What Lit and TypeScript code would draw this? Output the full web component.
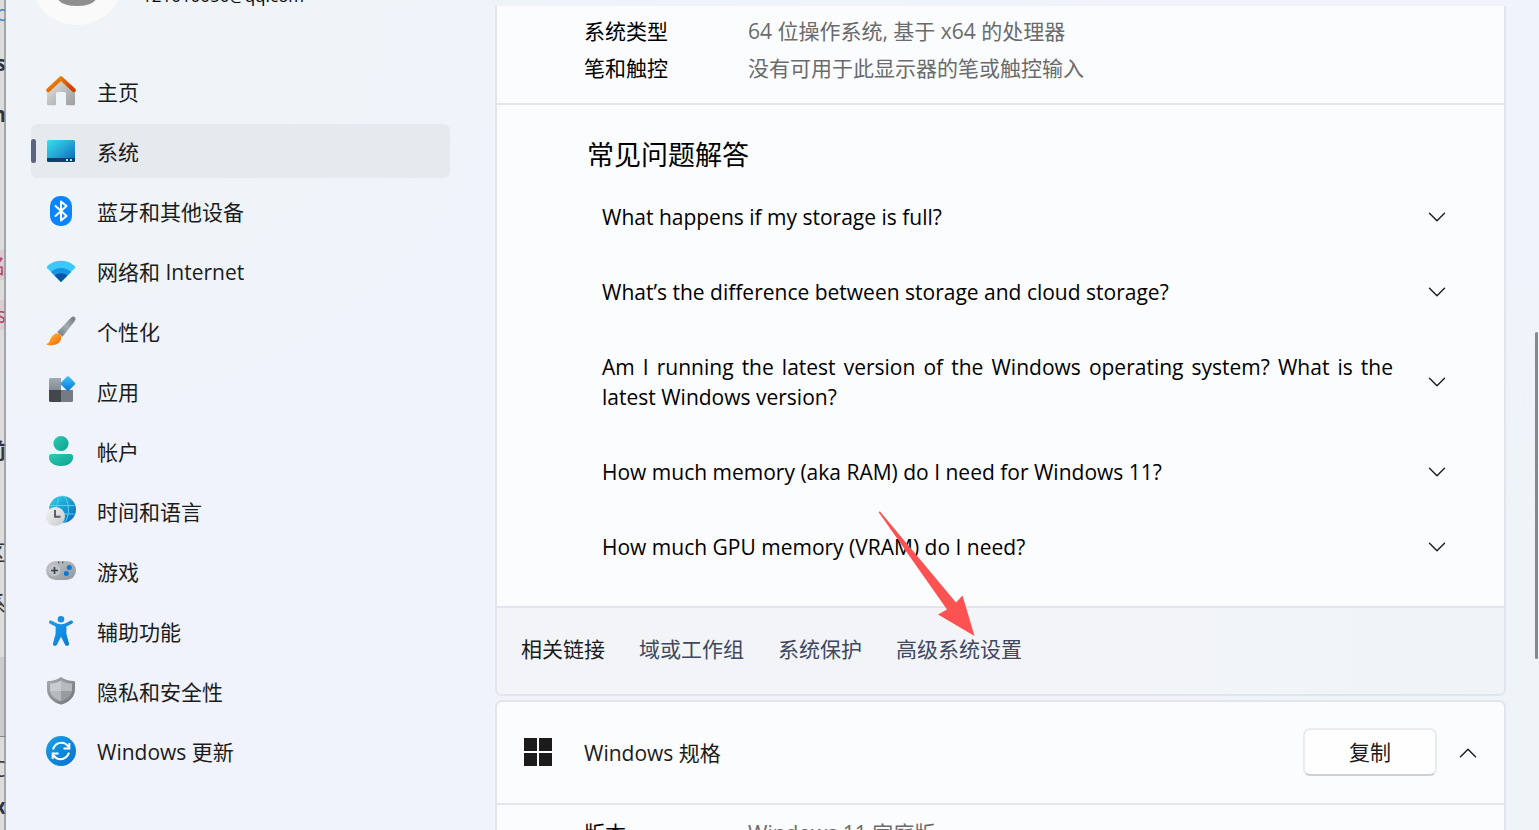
import { LitElement, html, css, svg } from "lit";
import { customElement, property } from "lit/decorators.js";

const chevron = (up = false) => html`<svg class="chev" viewBox="0 0 18 18" width="18" height="18" aria-hidden="true">
  <path d=${up ? "M1.5 13.8 9 6.2l7.5 7.6" : "M1.5 5.2 9 12.8l7.5-7.6"} fill="none" stroke="#1c1c1c" stroke-width="1.4" stroke-linecap="round" stroke-linejoin="round"/></svg>`;

const icons: Record<string, unknown> = {
  home: svg`<defs><linearGradient id="a" x1="0" y1="0" x2="1" y2="1"><stop offset="0" stop-color="#e6e6e6"/><stop offset="1" stop-color="#9c9c9c"/></linearGradient>
    <linearGradient id="b" x1="0" y1="0" x2="1" y2="0.6"><stop offset="0" stop-color="#f79a0c"/><stop offset="1" stop-color="#d43f00"/></linearGradient></defs>
    <path d="M1 14 15 2l14 12v14a1.300 1.300 0 0 1-1.300 1.300H21.300a1.300 1.300 0 0 1-1.300-1.300V17.500a1.500 1.500 0 0 0-1.500-1.500h-7A1.500 1.500 0 0 0 10 17.500V28a1.300 1.300 0 0 1-1.300 1.300H2.300A1.300 1.300 0 0 1 1 28Z" fill="url(#a)"/>
    <path d="M2.100 14.200 15 2.200l12.900 12" fill="none" stroke="url(#b)" stroke-width="4" stroke-linecap="round" stroke-linejoin="round"/>`,
  system: svg`<defs><linearGradient id="a" x1="0" y1="0" x2="1" y2="1"><stop offset="0" stop-color="#34e0ea"/><stop offset=".5" stop-color="#25a5d6"/><stop offset="1" stop-color="#0862b8"/></linearGradient></defs>
    <rect x="1" y="4" width="28" height="22" rx="1.600" fill="url(#a)"/><path d="M1 22h28v2.400a1.600 1.600 0 0 1-1.600 1.600H2.600A1.600 1.600 0 0 1 1 24.400Z" fill="#0b4468"/>
    <path d="M20 23h2v2h-2zM24 23h2v2h-2z" fill="#b8dcec"/>`,
  bluetooth: svg`<rect x="4" y="0" width="22" height="30" rx="10" fill="#0a85ff"/>
    <path d="m9.500 10 11 10-5.500 4.500v-19l5.500 4.500-11 10" fill="none" stroke="#fff" stroke-width="2" stroke-linejoin="round" stroke-linecap="round"/>`,
  wifi: svg`<path d="M15 26 1.300 12.200a1.500 1.500 0 0 1 0-2.100C8.800 3 21.200 3 28.700 10.100a1.500 1.500 0 0 1 0 2.100Z" fill="#3bcaf8"/>
    <path d="M15 26 5 16c5.600-5.300 14.400-5.300 20 0Z" fill="#1593e4"/><path d="m15 26-6.300-6.400c3.700-3 8.900-3 12.600 0Z" fill="#0b56a2"/>`,
  brush: svg`<defs><linearGradient id="a" x1="1" y1="0" x2="0" y2="1"><stop offset="0" stop-color="#6f767c"/><stop offset=".5" stop-color="#a4abb1"/><stop offset="1" stop-color="#6f767c"/></linearGradient>
    <linearGradient id="b" x1="0" y1="0" x2="1" y2="1"><stop offset="0" stop-color="#ffc23b"/><stop offset=".55" stop-color="#fb8d1a"/><stop offset="1" stop-color="#e65a16"/></linearGradient></defs>
    <path d="M28.800 1.200c1.300 1.200.7 2.800-.4 4.200L16.500 20.800l-5.200-4.900L25.200 1.500c1.200-1.200 2.500-1.400 3.600-.3Z" fill="url(#a)"/>
    <path d="M8 18.500c2.200-1.800 4.800-1.300 6.200.3 1.500 1.600 1.500 4.200-.3 6.700C11.500 29 4.500 30.200.8 28.800c-.5-.2-.4-.8.100-1 3.700-1.200 2.600-6.200 7.100-9.300Z" fill="url(#b)"/>`,
  apps: svg`<defs><linearGradient id="a" x1="0" y1="0" x2="0" y2="1"><stop offset="0" stop-color="#a2abb2"/><stop offset="1" stop-color="#858d94"/></linearGradient>
    <linearGradient id="b" x1="0" y1="0" x2="1" y2="1"><stop offset="0" stop-color="#3fc5fb"/><stop offset="1" stop-color="#0672d8"/></linearGradient></defs>
    <path d="M4.500 2H15v12H3V3.500A1.500 1.500 0 0 1 4.500 2Z" fill="url(#a)"/><path d="M3 14h12v12H4.500A1.500 1.500 0 0 1 3 24.500Z" fill="#42474b"/>
    <path d="M15 14h12v10.500a1.500 1.500 0 0 1-1.500 1.500H15Z" fill="#747b82"/>
    <rect x="16.300" y="2" width="11.200" height="11.200" rx="1.300" transform="rotate(45 21.900 7.600)" fill="url(#b)"/>`,
  account: svg`<defs><linearGradient id="a" x1="0" y1="0" x2="1" y2="1"><stop offset="0" stop-color="#30ccb5"/><stop offset="1" stop-color="#0ba18c"/></linearGradient></defs>
    <circle cx="15" cy="7.500" r="7.600" fill="url(#a)"/><path d="M5.500 18h19a2.500 2.500 0 0 1 2.500 2.500v1C27 26.800 21.500 30 15 30S3 26.800 3 21.500v-1A2.500 2.500 0 0 1 5.500 18Z" fill="url(#a)"/>`,
  time: svg`<defs><linearGradient id="a" x1="0" y1="0" x2="1" y2="1"><stop offset="0" stop-color="#34d3e6"/><stop offset="1" stop-color="#0761be"/></linearGradient>
    <linearGradient id="b" x1="0" y1="0" x2="1" y2="1"><stop offset="0" stop-color="#f4f4f4"/><stop offset="1" stop-color="#c8cacc"/></linearGradient></defs>
    <circle cx="16.500" cy="13.500" r="13.500" fill="url(#a)"/><g fill="none" stroke="#50d5ef" stroke-width="1"><ellipse cx="16.500" cy="13.500" rx="6" ry="13.500"/><path d="M4.500 9.500h24M4.500 18h24"/></g>
    <circle cx="9.500" cy="20.500" r="9.500" fill="url(#b)"/><path d="M9 14v6.800h5.500" fill="none" stroke="#5a5d60" stroke-width="1.900"/>`,
  game: svg`<defs><linearGradient id="a" x1="0" y1="0" x2="1" y2="1"><stop offset="0" stop-color="#c3c8cb"/><stop offset="1" stop-color="#8f969b"/></linearGradient></defs>
    <rect x="0" y="5" width="30" height="19" rx="9.500" fill="url(#a)"/><circle cx="8.500" cy="14.500" r="5.800" fill="#c9cccf" opacity=".7"/>
    <path d="M8.500 11v7M5 14.500h7" stroke="#3b3f42" stroke-width="1.600"/><circle cx="23.300" cy="11.500" r="2.500" fill="#0b78d4"/><circle cx="20.300" cy="17.500" r="2.500" fill="#0b78d4"/>
    <path d="M12 6.500h1.400M16 6.500h1.400" stroke="#4a4e52" stroke-width="1.400"/>`,
  access: svg`<defs><linearGradient id="a" x1="0" y1="0" x2="1" y2="1"><stop offset="0" stop-color="#1ba0ea"/><stop offset="1" stop-color="#0b78d4"/></linearGradient></defs>
    <circle cx="15" cy="3.300" r="3.300" fill="#168fe0"/><path d="M5.300 4.600 11 7.400q4 1.600 8 0l5.700-2.800c2-.8 3.300 2 1.300 3.100l-5.600 2.900v7.200l2.600 9.800c.6 2.600-3 3.200-3.900 1.200L15 20.800l-4.100 8c-1 2-4.500 1.200-3.900-1.200l2.600-9.800v-7.200L4 7.700C2 6.600 3.300 3.800 5.300 4.600Z" fill="url(#a)"/>`,
  shield: svg`<defs><linearGradient id="a" x1="0" y1="0" x2="1" y2="1"><stop offset="0" stop-color="#a9adb1"/><stop offset="1" stop-color="#6f7479"/></linearGradient></defs>
    <path d="M15 1c3.800 2.900 8.200 3.900 12.800 3.900.7 0 1.200.4 1.200 1.100v7.200C29 20.800 23.500 26 15.500 28.400q-.5.200-1 0C6.500 26 1 20.800 1 13.200V6c0-.7.500-1.100 1.200-1.100C6.800 4.900 11.200 3.900 15 1Z" fill="url(#a)"/>
    <path d="M15 4.600V15H4V7.600C8.200 7.500 11.800 6.700 15 4.600Z" fill="#c9ccce"/><path d="M15 4.600V15h11V7.600C21.800 7.500 18.200 6.700 15 4.600Z" fill="#b6babd"/>
    <path d="M15 15v10.300C9 23.200 4.600 20 4.100 15Z" fill="#b6babd"/><path d="M15 15v10.300C21 23.200 25.400 20 25.900 15Z" fill="#989ca1"/>`,
  update: svg`<defs><linearGradient id="a" x1="0" y1="0" x2="1" y2="1"><stop offset="0" stop-color="#1ba0e6"/><stop offset="1" stop-color="#0671d0"/></linearGradient></defs>
    <circle cx="15" cy="15" r="15" fill="url(#a)"/><g fill="none" stroke="#fff" stroke-width="2"><path d="M7 13.300C8.500 9 12 6.800 15.500 6.800c3 0 5.300 1.500 6.700 4M23.300 7v5.600h-5.800M23 16.700c-1.500 4.300-5 6.500-8.500 6.500-3 0-5.300-1.500-6.700-4M6.700 23v-5.600h5.800"/></g>`,
};

const nav = [
  ["home", "主页"], ["system", "系统"], ["bluetooth", "蓝牙和其他设备"], ["wifi", "网络和 Internet"],
  ["brush", "个性化"], ["apps", "应用"], ["account", "帐户"], ["time", "时间和语言"],
  ["game", "游戏"], ["access", "辅助功能"], ["shield", "隐私和安全性"], ["update", "Windows 更新"],
];

const questions = [
  "What happens if my storage is full?",
  "What’s the difference between storage and cloud storage?",
  "Am I running the latest version of the Windows operating system? What is the latest Windows version?",
  "How much memory (aka RAM) do I need for Windows 11?",
  "How much GPU memory (VRAM) do I need?",
];

// Sliver of the page behind the window: text, centre line, style
const slivers: [string, number, string][] = [
  ["ic", 13, "blue"], ["s", 63, "bold"], ["n", 114, "bold"], ["名", 265, "pink"], ["s", 315, "pink"],
  ["前", 450, "bold"], ["区", 552, "plain"], ["系", 603, "plain"], ["C", 769, "plain"], ["x", 806, "bold"],
];

@customElement("nav-icon")
export class NavIcon extends LitElement {
  @property() name = "home";
  static styles = css`:host { display: block; width: 30px; height: 30px; } svg { display: block; overflow: visible; }`;
  render() {
    return html`<svg viewBox="0 0 30 30" width="30" height="30" aria-hidden="true">${icons[this.name]}</svg>`;
  }
}

@customElement("app-root")
export class AppRoot extends LitElement {
  static styles = css`
    :host {
      display: grid; grid-template-columns: 6px 444px 1fr;
      height: 100vh; overflow: hidden; position: relative; box-sizing: border-box;
      font: 21px/30px "Open Sans", "Noto Sans CJK SC", sans-serif; color: #1b1b1b;
      background:
        linear-gradient(to right, #eef4f8, #eef4f800 1100px) top / 100% 6px no-repeat,
        radial-gradient(ellipse 560px 460px at 0 0, #eef4f8 55%, #eef4f800),
        radial-gradient(ellipse 340px 600px at 100% 100%, #eef4f8 50%, #eef4f800),
        #f0f3fb;
    }
    * { box-sizing: border-box; }
    a { color: inherit; text-decoration: none; }
    button { font: inherit; color: inherit; background: none; border: 0; padding: 0; cursor: pointer; }
    .behind { position: relative; overflow: hidden; background: #dcdcdc; }
    .behind::before { content: ""; position: absolute; inset: 657px 0 93px; background: #c9cbcd; border-bottom: 1px solid #85888c; }
    .behind::after { content: ""; position: absolute; inset: 0 0 0 4px; background: #8a8a8aaa; }
    .frag { position: absolute; right: 0; height: 30px; width: 6px; direction: rtl; white-space: nowrap; color: #333; }
    .frag.blue { color: #3f86c8; }
    .frag.bold { font-weight: 700; color: #2b3546; }
    .frag.pink { color: #b8446a; background: #d9cdd1; }
    .side { padding-left: 25px; min-width: 0; }
    .user { display: flex; gap: 19px; height: 90px; margin-top: -65px; margin-bottom: 39px; font-size: 17px; line-height: 24px; color: #000; }
    .avatar { width: 92px; height: 90px; border-radius: 50%; background: #fafafa; display: grid; justify-items: center; align-items: end; padding-bottom: 19px; }
    .avatar svg { display: block; }
    .mail { padding-top: 49px; }
    nav { display: flex; flex-direction: column; gap: 6px; }
    .item { display: flex; align-items: center; gap: 21px; height: 54px; padding-left: 15px; border-radius: 6px; position: relative; }
    .item span { padding-top: 2px; }
    .item.on { background: #e6e9ee; }
    .item.on::before { content: ""; position: absolute; left: 0; top: 15px; width: 5px; height: 24px; border-radius: 3px; background: #5a667c; }
    main { padding: 6px 33px 0 45px; overflow: hidden; min-width: 0; }
    .clip { overflow: hidden; display: flex; flex-direction: column; gap: 4px; }
    .card { border: 2px solid #e2e5eb; border-radius: 7px; background: #fbfcfe; flex: none; }
    .card.first { border-top: 0; border-radius: 0 0 7px 7px; }
    dl { margin: 0; display: grid; grid-template-columns: 164px 1fr; row-gap: 7px; padding: 10px 24px 20px 87px; color: #000; }
    .head + dl { padding-top: 13px; }
    dd { margin: 0; color: #6a6b6c; }
    .faq { border-top: 2px solid #e2e5eb; border-bottom: 2px solid #e2e5eb; padding: 30px 58px 44px 90px; color: #000; }
    h2 { margin: 0 0 27px; font-size: 27px; line-height: 40px; font-weight: 400; }
    .list { display: flex; flex-direction: column; gap: 45px; padding-left: 15px; }
    .q { display: flex; align-items: center; justify-content: space-between; gap: 35px; width: 100%; text-align: justify; }
    .chev { display: block; flex: none; }
    .links { display: flex; align-items: center; gap: 34px; height: 86px; padding: 0 24px 4px; background: linear-gradient(to right, #f2f4f8 60%, #f0f4f7); border-radius: 0 0 5px 5px; color: #404860; }
    .links h3 { margin: 0; font-size: 21px; font-weight: 400; color: #1b1b1b; }
    .head { display: flex; align-items: center; height: 103px; padding: 0 27px 2px 26px; border-bottom: 2px solid #e2e5eb; }
    .head h3 { margin: 0 0 0 31px; padding-top: 2px; font-size: 21px; font-weight: 400; flex: 1; }
    .copy { width: 134px; height: 48px; border: 2px solid #ececee; border-bottom-color: #cfd0d1; border-radius: 7px; background: #fefefe; margin-right: 22px; }
    .thumb { position: absolute; right: 1px; top: 40%; width: 3px; height: 327px; border-radius: 2px; background: #868a8d; }
    .arrow { position: absolute; left: 876px; top: 509px; pointer-events: none; }
  `;
  render() {
    return html`
      <div class="behind" aria-hidden="true">${slivers.map(([t, y, k]) => html`<span class="frag ${k}" style="top:${y - 15}px">${t}</span>`)}</div>
      <aside class="side">
        <div class="user"><div class="avatar"><svg width="44" height="24" viewBox="0 0 44 24"><path d="M0 0h44v8q0 16-22 16T0 8Z" fill="#8f8f8f"/></svg></div><span class="mail">121010050@qq.com</span></div>
        <nav>${nav.map(([k, t]) => html`<a href="#" class="item ${k === "system" ? "on" : ""}"><nav-icon name=${k}></nav-icon><span>${t}</span></a>`)}</nav>
      </aside>
      <main><div class="clip">
        <section class="card first">
          <dl><dt>系统类型</dt><dd>64 位操作系统, 基于 x64 的处理器</dd><dt>笔和触控</dt><dd>没有可用于此显示器的笔或触控输入</dd></dl>
          <div class="faq"><h2>常见问题解答</h2>
            <div class="list">${questions.map((q) => html`<button class="q"><span>${q}</span>${chevron()}</button>`)}</div></div>
          <div class="links"><h3>相关链接</h3><a href="#">域或工作组</a><a href="#">系统保护</a><a href="#">高级系统设置</a></div>
        </section>
        <section class="card">
          <div class="head"><svg width="30" height="30" viewBox="0 0 30 30"><path d="M1 1h13v13H1zM16 1h13v13H16zM1 16h13v13H1zM16 16h13v13H16z" fill="#1b1b1b"/></svg>
            <h3>Windows 规格</h3><button class="copy">复制</button><button aria-label="收起">${chevron(true)}</button></div>
          <dl><dt>版本</dt><dd>Windows 11 家庭版</dd></dl>
        </section>
      </div></main>
      <div class="thumb"></div>
      <svg class="arrow" width="102" height="130" viewBox="0 0 102 130" aria-hidden="true"><path d="M2.500 3 4 2.500 80 93.500 86.500 86.500 98.500 127 62 105.500 71 100.500Z" fill="#fc5252"/></svg>
    `;
  }
}
